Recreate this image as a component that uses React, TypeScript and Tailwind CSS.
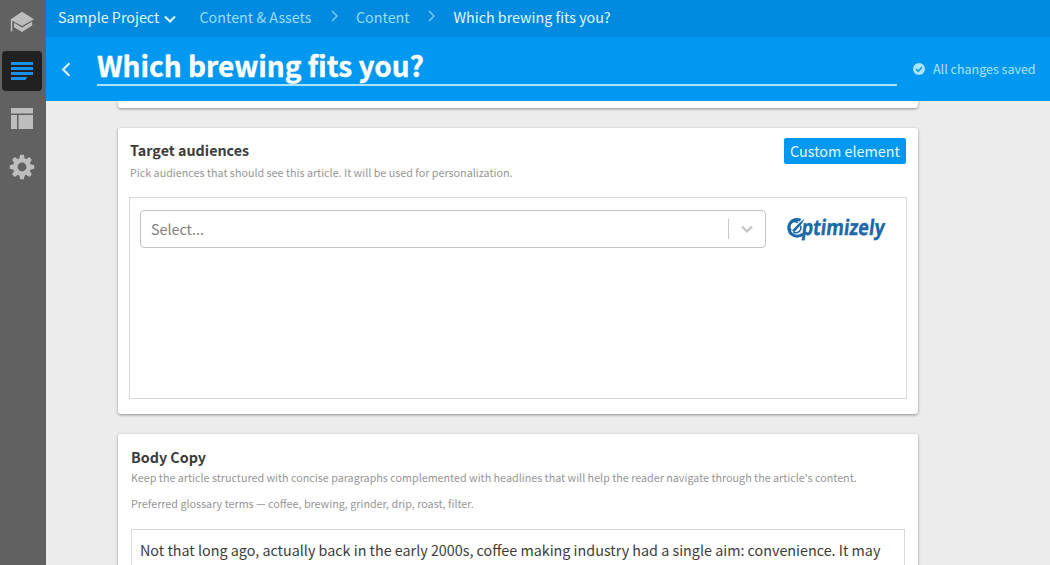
import React from 'react';

function CapIcon() {
  return (
    <svg width="26" height="24" viewBox="0 0 26 24" fill="#bdbdbd">
      <path d="M13 .8 25 8.2 13 15 3.3 9.7V20.5H1.8V8.2z" />
      <path d="M5 11.8 13 16.4 23.2 10.6V14.6L13 21 5 16.2z" />
    </svg>
  );
}

function TextIcon() {
  return (
    <svg width="22" height="18" viewBox="0 0 22 18" fill="#1592ee">
      <path d="M0 0h22v3H0zM0 5h22v3H0zM0 10h22v3H0zM0 15h16l-1.5 3H0z" />
    </svg>
  );
}

function LayoutIcon() {
  return (
    <svg width="22" height="21" viewBox="0 0 22 21" fill="#bdbdbd">
      <path d="M0 0h22v5.5H0zM0 7h6v14H0zM7.5 7H22v14H7.5z" />
    </svg>
  );
}

function GearIcon() {
  const teeth = [0, 45, 90, 135, 180, 225, 270, 315];
  return (
    <svg width="26" height="26" viewBox="-13 -13 26 26" fill="#bdbdbd">
      {teeth.map((angle) => (
        <path key={angle} d="M-2.9-7.5-1.8-12.2H1.8L2.9-7.5z" transform={`rotate(${angle})`} />
      ))}
      <circle r="6.7" fill="none" stroke="#bdbdbd" strokeWidth="4.6" />
    </svg>
  );
}

function Chevron({ className, d, width }: { className: string; d: string; width: number }) {
  return (
    <svg className={className} viewBox="0 0 12 12" fill="none" stroke="currentColor" strokeWidth={width}>
      <path d={d} />
    </svg>
  );
}

function OptimizelyLogo() {
  return (
    <svg className="overflow-visible" width="112" height="44" viewBox="0 -4 112 44" fill="#1b69a8">
      <path d="M16.6 10.2A8.4 8.4 0 1 0 18.6 24.2" fill="none" stroke="#1b69a8" strokeWidth="3" />
      <path d="M8 20.6 14.5 13.8 20.5 8.6 17.8 13.8 10.4 22z" />
      <path d="M7.2 20.4A5 5 0 0 1 13.8 12.8" fill="none" stroke="#1b69a8" strokeWidth="2" />
      <path d="M9.4 22A5 5 0 0 0 16.4 15.6" fill="none" stroke="#1b69a8" strokeWidth="1.6" />
      <text
        x="20"
        y="25"
        transform="skewX(-7)"
        fontFamily="'Open Sans', sans-serif"
        fontSize="21.5"
        fontWeight="700"
        stroke="#1b69a8"
        strokeWidth="0.4"
        textLength="83"
        lengthAdjust="spacingAndGlyphs"
      >
        ptimizely
      </text>
    </svg>
  );
}

function Sidebar() {
  return (
    <nav className="flex w-[46px] shrink-0 flex-col items-center bg-[#616161] pr-0.5">
      <div className="flex h-[51px] w-10 items-center justify-center pb-[6px]">
        <CapIcon />
      </div>
      <div className="flex h-10 w-10 items-center justify-center rounded bg-[#212121]">
        <TextIcon />
      </div>
      <div className="flex h-[55px] w-10 items-center justify-center">
        <LayoutIcon />
      </div>
      <div className="flex h-[41px] w-10 items-center justify-center">
        <GearIcon />
      </div>
    </nav>
  );
}

const crumbSeparator = 'M3 1l5 5-5 5';

export default function App() {
  return (
    <div className="flex h-[565px] w-[1050px] overflow-hidden bg-[#ececec] font-['Noto_Sans_CJK_SC',sans-serif] text-[#3c3c3c]">
      <Sidebar />
      <div className="flex min-w-0 flex-1 flex-col">
        <div className="flex h-[37px] shrink-0 items-center bg-[#008be0] pl-3 pb-1 text-[14.3px] leading-5 whitespace-nowrap text-[#9bdcff]">
          <span className="w-[102px] text-[#e2f8ff]">Sample Project</span>
          <Chevron className="mt-1 ml-1 h-3 w-3 text-[#e2f8ff]" d="M1 3.5l5 5 5-5" width={2} />
          <span className="ml-[23.5px] w-[113px]">Content &amp; Assets</span>
          <Chevron className="mb-0.5 ml-4 h-3 w-3 text-[#71c6f8]" d={crumbSeparator} width={1.6} />
          <span className="ml-[15.5px] w-[55px]">Content</span>
          <Chevron className="mb-0.5 ml-[15px] h-3 w-3 text-[#71c6f8]" d={crumbSeparator} width={1.6} />
          <span className="ml-[15.5px] text-[#e2f8ff]">Which brewing fits you?</span>
        </div>
        <header className="flex h-16 shrink-0 bg-[#0098f0]">
          <svg className="mt-[25px] ml-[14px] h-[15px] w-3" viewBox="0 0 12 15" fill="none" stroke="#e2f8ff" strokeWidth="2">
            <path d="M9.5 1.2 3 7.5l6.5 6.3" />
          </svg>
          <h1 className="ml-[25px] h-[49px] w-[800px] border-b-2 border-[#a9e2ff] pt-[9px] text-[28px] leading-[38px] font-bold whitespace-nowrap text-white [-webkit-text-stroke:0.4px_white]">
            Which brewing fits you?
          </h1>
          <div className="mt-[22px] ml-4 flex h-5 items-center text-[12.5px] leading-5 whitespace-nowrap text-[#ace4ff]">
            <svg className="mr-2 h-3 w-3" viewBox="0 0 12 12">
              <circle cx="6" cy="6" r="6" fill="#ace4ff" />
              <path d="M3 6.1 5.2 8.2 9 4.2" fill="none" stroke="#0098f0" strokeWidth="1.5" />
            </svg>
            All changes saved
          </div>
        </header>
        <main className="ml-[72px] flex w-[800px] flex-col">
          <div className="mb-5 h-[7px] shrink-0 rounded-b-[3px] bg-white shadow-[0_1px_3px_rgba(0,0,0,0.4)] [clip-path:inset(0_-5px_-5px_-5px)]" />
          <section className="mb-5 flex h-[286px] shrink-0 flex-col rounded-[3px] bg-white pt-2.5 pr-3 pl-[11px] shadow-[0_1px_3px_rgba(0,0,0,0.4)]">
            <div className="flex h-[59px] justify-between">
              <div className="pl-px">
                <h2 className="h-[25px] text-[14.3px] leading-[23px] font-bold">Target audiences</h2>
                <p className="text-[10.75px] leading-5 whitespace-nowrap text-[#969696]">
                  Pick audiences that should see this article. It will be used for personalization.
                </p>
              </div>
              <div className="flex h-[26px] w-[122px] items-center justify-center rounded-[2px] bg-[#0098f0] text-[14.35px] leading-5 whitespace-nowrap text-[#e6fbff]">
                Custom element
              </div>
            </div>
            <div className="flex h-[202px] w-[778px] border border-[#d9d9d9] pt-3 pl-2.5">
              <div className="flex h-[38px] w-[626px] items-center rounded border border-[#c4c4c4] pl-2.5 text-[14.3px] leading-5 text-[#808080]">
                <span className="flex-1">Select...</span>
                <span className="h-5 w-px bg-[#c8c8c8]" />
                <Chevron className="mx-3 h-3 w-3 text-[#c4c4c4]" d="M1 3.5l5 5 5-5" width={2.2} />
              </div>
              <div className="-mt-1 ml-[18px]">
                <OptimizelyLogo />
              </div>
            </div>
          </section>
          <section className="flex h-[200px] shrink-0 flex-col rounded-[3px] bg-white pt-3 pl-[13px] shadow-[0_1px_3px_rgba(0,0,0,0.4)]">
            <h2 className="h-[22px] text-[14.3px] leading-[22px] font-bold">Body Copy</h2>
            <p className="h-[26px] text-[10.75px] leading-5 whitespace-nowrap text-[#969696]">
              Keep the article structured with concise paragraphs complemented with headlines that will help the reader navigate through the article's content.
            </p>
            <p className="h-[35px] text-[10.75px] leading-5 whitespace-nowrap text-[#969696]">
              Preferred glossary terms — coffee, brewing, grinder, drip, roast, filter.
            </p>
            <div className="h-[100px] w-[774px] border border-[#d9d9d9] pt-[9px] pl-2 text-[14.34px] leading-[22px] whitespace-nowrap">
              Not that long ago, actually back in the early 2000s, coffee making industry had a single aim: convenience. It may
            </div>
          </section>
        </main>
      </div>
    </div>
  );
}
